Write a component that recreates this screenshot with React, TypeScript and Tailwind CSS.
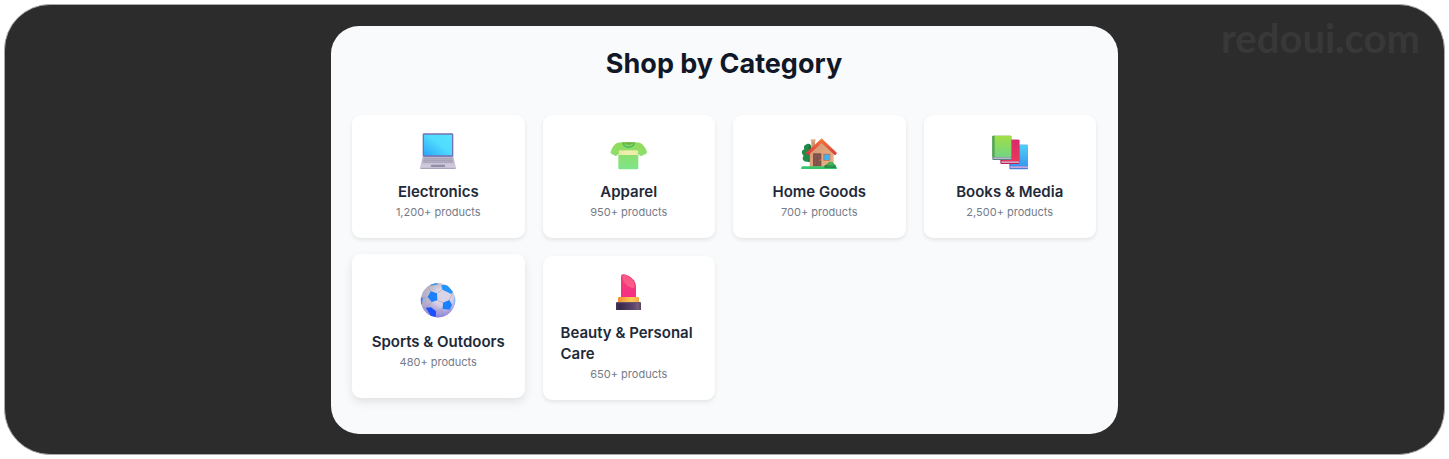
import type { ReactNode } from "react";

type Category = {
  name: string;
  count: string;
  icon: ReactNode;
  raised?: boolean;
};

const iconClass = "block size-9 overflow-visible";

function LaptopIcon() {
  return (
    <svg viewBox="0 0 108 108" className={iconClass} aria-hidden="true">
      <defs>
        <linearGradient id="screen" x1="0" y1="1" x2="1" y2="0">
          <stop offset="0" stopColor="#2ba6fb" />
          <stop offset="0.55" stopColor="#50dcfd" />
          <stop offset="1" stopColor="#55e3ff" />
        </linearGradient>
        <linearGradient id="deck" x1="0" y1="0" x2="0" y2="1">
          <stop offset="0" stopColor="#b9b4c8" />
          <stop offset="1" stopColor="#d6d0e2" />
        </linearGradient>
      </defs>
      <rect x="8" y="1" width="92" height="71" rx="4" fill="#7470b3" />
      <rect x="12" y="5" width="84" height="62" rx="1" fill="url(#screen)" />
      <path d="M8 71H100L108 104Q108 108 104 108H4Q0 108 0 104Z" fill="url(#deck)" />
      <path d="M0 104H108Q107 108 104 108H4Q1 108 0 104Z" fill="#aaa4bb" />
      <path d="M11 76H97L100 89H8Z" fill="#a49eb4" />
      <path d="M10 80H98M9 85H99" stroke="#d0cadb" strokeWidth="1.6" strokeDasharray="4 2" />
      <path d="M34 95H74L76 102H32Z" fill="#928ca5" />
    </svg>
  );
}

function ShirtIcon() {
  return (
    <svg viewBox="34 25 108 108" className={iconClass} aria-hidden="true">
      <defs>
        <linearGradient id="shirt" x1="0" y1="0" x2="0" y2="1">
          <stop offset="0" stopColor="#95da56" />
          <stop offset="1" stopColor="#7fe58b" />
        </linearGradient>
        <linearGradient id="shirtBand" x1="0" y1="0" x2="1" y2="0">
          <stop offset="0" stopColor="#e2ea9f" />
          <stop offset="0.5" stopColor="#f3eeb0" />
          <stop offset="1" stopColor="#e6eda6" />
        </linearGradient>
      </defs>
      <path
        d="M68 53H106C118 53 125 55 130 61C136 68 140 75 142 82Q143 85 139 87L127 93Q122 95 120 92L116 87V130Q116 134 112 134H60Q56 134 56 130V87L52 92Q50 95 46 93L35 87Q32 85 33 82C35 75 38 68 44 61C49 55 56 53 68 53Z"
        fill="url(#shirt)"
      />
      <path d="M56 77H116V91H56Z" fill="url(#shirtBand)" />
      <path d="M56 74V90M116 74V90" stroke="#62bf50" strokeWidth="1.5" opacity=".5" />
      <path d="M72 53H102C98 64 76 64 72 53Z" fill="#71b23f" />
      <path d="M70 53C71 72 103 72 104 53" fill="none" stroke="#45bc67" strokeWidth="5" />
    </svg>
  );
}

function HouseIcon() {
  return (
    <svg viewBox="27 26 108 108" className={iconClass} aria-hidden="true">
      <defs>
        <linearGradient id="wall" x1="0" y1="0" x2="1" y2="1">
          <stop offset="0" stopColor="#cf9475" />
          <stop offset="1" stopColor="#eeb482" />
        </linearGradient>
        <linearGradient id="roof" x1="0" y1="0" x2="0" y2="1">
          <stop offset="0" stopColor="#f47a38" />
          <stop offset="1" stopColor="#d7363e" />
        </linearGradient>
        <radialGradient id="bush" cx=".6" cy=".3" r=".7">
          <stop offset="0" stopColor="#4fbd56" />
          <stop offset="1" stopColor="#1e8148" />
        </radialGradient>
      </defs>
      <path d="M44 60C51 56 58 61 58 70V112H46C34 113 28 102 35 94C27 88 28 77 37 75C34 69 36 62 44 60Z" fill="#238a48" />
      <path d="M52 60C59 66 54 76 58 82V112H47C57 98 45 88 52 60Z" fill="#176b3c" />
      <path d="M58 48H69V75H58Z" fill="#cc9678" />
      <rect x="56" y="45" width="15" height="6" rx="2" fill="#e6ad80" />
      <path d="M89 48L125 82V128H53V82Z" fill="url(#wall)" />
      <path d="M89 43L134 86L129 92L89 55L48 92L42 86Z" fill="url(#roof)" stroke="url(#roof)" strokeWidth="2" strokeLinejoin="round" />
      <rect x="63" y="87" width="25" height="39" rx="2" fill="#7f514a" />
      <path d="M67 92H73V102H67ZM77 92H83V102H77ZM67 108H73V122H67ZM77 108H83V122H77Z" fill="#895850" />
      <circle cx="84" cy="107" r="1.8" fill="#f2b65c" />
      <rect x="94" y="88" width="21" height="21" rx="2" fill="#b77458" />
      <rect x="97" y="91" width="17" height="16" fill="#3bb4f5" />
      <path d="M31 126H131Q135 127 135 134H28Q27 127 31 126Z" fill="#36c567" />
      <path d="M97 130C96 122 101 120 105 121C107 110 123 109 126 119C132 120 133 127 130 131Z" fill="url(#bush)" />
    </svg>
  );
}

function BooksIcon() {
  return (
    <svg viewBox="29 26 108 108" className={iconClass} aria-hidden="true">
      <defs>
        <linearGradient id="bookGreen" x1="0" y1="0" x2="0" y2="1">
          <stop offset="0" stopColor="#a2df45" />
          <stop offset="1" stopColor="#72d583" />
        </linearGradient>
        <linearGradient id="bookRed" x1="0" y1="0" x2="0" y2="1">
          <stop offset="0" stopColor="#d9296e" />
          <stop offset="1" stopColor="#ec3758" />
        </linearGradient>
        <linearGradient id="bookBlue" x1="0" y1="0" x2="0" y2="1">
          <stop offset="0" stopColor="#50cff4" />
          <stop offset="1" stopColor="#379af1" />
        </linearGradient>
      </defs>
      <rect x="81" y="61" width="56" height="74" rx="3" fill="#4b7fd5" />
      <rect x="86" y="61" width="51" height="64" rx="2" fill="url(#bookBlue)" />
      <rect x="84" y="126" width="53" height="5" fill="#c9a8df" />
      <rect x="54" y="46" width="57" height="73" rx="3" fill="#b72357" />
      <rect x="60" y="46" width="51" height="64" rx="2" fill="url(#bookRed)" />
      <rect x="57" y="111" width="53" height="5" fill="#dda4c8" />
      <rect x="30" y="34" width="57" height="73" rx="3" fill="#578579" />
      <rect x="30" y="34" width="8" height="64" rx="2" fill="#55a751" />
      <rect x="37" y="34" width="50" height="64" rx="2" fill="url(#bookGreen)" />
      <rect x="33" y="99" width="54" height="5" fill="#bbb2cf" />
    </svg>
  );
}

function BallIcon() {
  return (
    <svg viewBox="29 25 108 108" className={iconClass} aria-hidden="true">
      <defs>
        <linearGradient id="ball" x1=".4" y1="0" x2=".6" y2="1">
          <stop offset="0" stopColor="#d1d0d2" />
          <stop offset="0.55" stopColor="#c5bddb" />
          <stop offset="1" stopColor="#9382ff" />
        </linearGradient>
        <radialGradient id="ballShade" cx=".65" cy=".42" r=".62">
          <stop offset="0.4" stopColor="#e7dfef" stopOpacity=".6" />
          <stop offset="1" stopColor="#7878a0" stopOpacity=".3" />
        </radialGradient>
        <clipPath id="ballClip">
          <circle cx="83" cy="77" r="52" />
        </clipPath>
      </defs>
      <g clipPath="url(#ballClip)">
        <circle cx="83" cy="77" r="52" fill="url(#ball)" />
        <circle cx="83" cy="77" r="52" fill="url(#ballShade)" />
        <path
          d="M61 50L52 35M80 56L95 45M64 82L48 99M52 67L37 70M81 77L98 84M77 109L94 106L98 102M117 77L125 59M118 105L124 112M94 106L101 130"
          fill="none"
          stroke="#99929f"
          strokeWidth="1.4"
        />
        <path d="M61 50L80 56L81 77L64 82L52 67Z" fill="#1b80fa" />
        <path d="M98 84L117 76L125 90L118 105L97 103Z" fill="#1980fb" />
        <path d="M93 31L111 32L128 52L123 58L96 45Z" fill="#2394fb" />
        <path d="M46 99L62 98L77 110V126L62 124Z" fill="#1b50ff" />
        <path d="M56 31L76 24L85 29L64 33Z" fill="#4897ed" />
        <path d="M29 67L38 70L34 90L31 86Z" fill="#487ee5" />
        <path d="M132 66L137 69V91L131 88Z" fill="#85b4ff" />
      </g>
    </svg>
  );
}

function LipstickIcon() {
  return (
    <svg viewBox="33 23 108 108" className={iconClass} aria-hidden="true">
      <defs>
        <linearGradient id="lip" x1="0" y1="0" x2="0" y2="1">
          <stop offset="0" stopColor="#ef4172" />
          <stop offset="1" stopColor="#f82d88" />
        </linearGradient>
        <linearGradient id="gold" x1="0" y1="0" x2="1" y2="0">
          <stop offset="0" stopColor="#f68c34" />
          <stop offset="0.65" stopColor="#ffcc53" />
          <stop offset="1" stopColor="#efa94b" />
        </linearGradient>
        <linearGradient id="case" x1="0" y1="0" x2="1" y2="0">
          <stop offset="0" stopColor="#45364f" />
          <stop offset="0.12" stopColor="#35284b" />
          <stop offset="0.72" stopColor="#60466e" />
          <stop offset="0.88" stopColor="#785d7c" />
          <stop offset="1" stopColor="#51415b" />
        </linearGradient>
      </defs>
      <path d="M63 94V31Q63 23 71 24C91 27 108 44 108 60V94Z" fill="url(#lip)" />
      <path d="M67 29C71 23 80 27 87 32C102 43 107 56 103 64C94 68 67 55 67 29Z" fill="#fb5a88" />
      <path d="M54 108V96Q54 92 58 92H113Q117 92 117 96V108Z" fill="url(#gold)" />
      <path d="M48 131V111Q48 107 52 107H119Q123 107 123 111V131Z" fill="url(#case)" />
      <path d="M50 109H121" stroke="#6e5674" strokeWidth="3" />
    </svg>
  );
}

const categories: Category[] = [
  { name: "Electronics", count: "1,200+ products", icon: <LaptopIcon /> },
  { name: "Apparel", count: "950+ products", icon: <ShirtIcon /> },
  { name: "Home Goods", count: "700+ products", icon: <HouseIcon /> },
  { name: "Books & Media", count: "2,500+ products", icon: <BooksIcon /> },
  { name: "Sports & Outdoors", count: "480+ products", icon: <BallIcon />, raised: true },
  { name: "Beauty & Personal Care", count: "650+ products", icon: <LipstickIcon /> },
];

function CategoryCard({ name, count, icon, raised }: Category) {
  return (
    <a
      href="#"
      className={`flex flex-col items-center justify-center rounded-[9px] bg-white p-[18px] ${
        raised
          ? "-translate-y-0.5 shadow-[0_4px_10px_rgba(0,0,0,0.1)]"
          : "shadow-[0_2px_4px_rgba(0,0,0,0.09)]"
      }`}
    >
      <span className="mb-3">{icon}</span>
      <h3 className="text-[15px] leading-[21px] font-semibold text-gray-800">{name}</h3>
      <p className="mt-0.5 text-[11px] leading-4 text-[#757b88]">{count}</p>
    </a>
  );
}

export default function App() {
  return (
    <div className="bg-white p-1 font-['Inter',sans-serif]">
      <main className="relative rounded-[46px] border border-[#aaaaaa] bg-[#2c2c2c] px-6 pt-[21px] pb-5">
        <span className="absolute top-2 right-6 font-['Lato',sans-serif] text-[40px] leading-[50px] font-bold text-[#383838]">
          redoui.com
        </span>
        <section className="relative mx-auto max-w-[787px] rounded-[28px] bg-gray-50 pt-5 pr-[22px] pb-[34px] pl-[21px]">
          <h2 className="mb-[33px] text-center text-[27px] leading-9 font-bold text-gray-900">
            Shop by Category
          </h2>
          <div className="grid grid-cols-2 gap-[18px] md:grid-cols-4">
            {categories.map((category) => (
              <CategoryCard key={category.name} {...category} />
            ))}
          </div>
        </section>
      </main>
    </div>
  );
}
